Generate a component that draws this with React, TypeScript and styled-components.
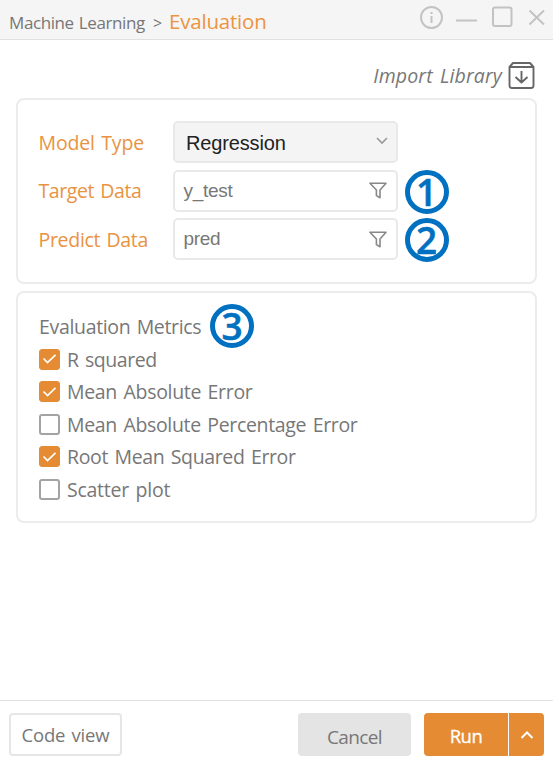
import React, { useState } from "react";
import styled, { createGlobalStyle, css } from "styled-components";

const orange = "#e58b33";
const line = "#e9e9e9";

const Global = createGlobalStyle`
  *, *::before, *::after { box-sizing: border-box; }
  body { margin: 0; background: #fff; }
  button { font: inherit; padding: 0; margin: 0; cursor: pointer; }
`;

const Window = styled.div`
  width: 553px;
  height: 771px;
  display: flex;
  flex-direction: column;
  background: #fff;
  color: #777;
  font-family: "Open Sans", "Noto Sans", sans-serif;
  font-size: 19.5px;
  overflow: hidden;
`;

const Header = styled.header`
  height: 40px;
  flex: none;
  display: flex;
  justify-content: space-between;
  padding: 0 7px 0 9px;
  background: #f5f5f5;
  border-bottom: 1px solid #e0e0e0;
`;

const Breadcrumb = styled.div`
  display: flex;
  align-items: baseline;
  white-space: nowrap;
  line-height: 42px;
`;

const Text = styled.span<{ $spacing?: number; $word?: number }>`
  white-space: nowrap;
  letter-spacing: ${(p) => p.$spacing ?? 0}px;
  word-spacing: ${(p) => p.$word ?? 0}px;
`;

const Parent = styled(Text)`
  font-size: 17px;
  width: 144px;
`;

const Separator = styled(Text)`
  width: 16px;
  font-size: 16px;
`;

const Current = styled(Text)`
  font-size: 20.5px;
  color: #ec9441;
`;

const WindowControls = styled.div`
  display: flex;
  svg { display: block; }
`;

const Content = styled.main`
  flex: 1;
  display: flex;
  flex-direction: column;
  padding: 18px 16px 0;
`;

const ImportRow = styled.div`
  height: 40px;
  flex: none;
  display: flex;
  align-items: flex-start;
  justify-content: flex-end;
  padding-right: 1px;
  line-height: 36px;
  font-style: italic;
  svg { display: block; margin: 3px 0 0 5px; }
`;

const Panel = styled.section<{ $height: number }>`
  height: ${(p) => p.$height}px;
  flex: none;
  margin-bottom: 7px;
  border: 2px solid #ececec;
  border-radius: 8px;
`;

const FieldsPanel = styled(Panel)`
  display: grid;
  grid-template-columns: 134px 225px;
  grid-auto-rows: 42px;
  row-gap: 6.5px;
  padding: 21px 0 0 20.5px;
  align-items: center;
`;

const Label = styled(Text)`
  color: #e99342;
`;

const control = css`
  width: 225px;
  height: 42px;
  position: relative;
  display: flex;
  align-items: center;
  justify-content: space-between;
  border: 2px solid ${line};
  border-radius: 5px;
  white-space: nowrap;
  svg { display: block; }
`;

const Select = styled.div`
  ${control}
  background: #f4f4f4;
  color: #222;
  font-family: "Liberation Sans", Arial, sans-serif;
  font-size: 20px;
  padding: 2px 7px 0 11.5px;
  svg { margin-top: -2px; }
`;

const Field = styled.div`
  ${control}
  background: #fff;
  padding: 0 9px 0 9px;
  font-family: "Liberation Sans", Arial, sans-serif;
  font-size: 19px;
`;

const Marker = styled.span<{ $left: number; $top: number }>`
  position: absolute;
  left: ${(p) => p.$left}px;
  top: ${(p) => p.$top}px;
  width: 44px;
  height: 44px;
  border: 5px solid #0070c0;
  border-radius: 50%;
  color: #0070c0;
  font: 600 37px/33px "Open Sans", "Noto Sans", sans-serif;
  -webkit-text-stroke: 0.5px #0070c0;
  text-align: center;
`;

const MetricsPanel = styled(Panel)`
  padding: 16px 0 0 21px;
`;

const MetricsTitle = styled.div`
  position: relative;
  height: 34px;
  line-height: 35px;
`;

const Metric = styled.div`
  height: 32.5px;
  display: flex;
  align-items: center;
  gap: 7px;
  cursor: pointer;
`;

const Checkbox = styled.span<{ $checked: boolean }>`
  width: 21px;
  height: 21px;
  flex: none;
  display: grid;
  place-items: center;
  border-radius: 3px;
  border: ${(p) => (p.$checked ? `1px solid ${orange}` : "2px solid #a3a3a3")};
  background: ${(p) => (p.$checked ? orange : "#fff")};
  svg { display: block; }
`;

const Footer = styled.footer`
  height: 71px;
  flex: none;
  display: flex;
  align-items: flex-start;
  padding: 12px 9px 0;
  border-top: 1px solid #e2e2e2;
`;

const Button = styled.button`
  height: 43px;
  display: flex;
  align-items: center;
  justify-content: center;
  border: 0;
  color: #777;
`;

const CodeButton = styled(Button)`
  width: 113px;
  margin-right: auto;
  background: #fff;
  border: 2px solid #e6e6e6;
  border-radius: 4px;
  font-size: 18.5px;
`;

const CancelButton = styled(Button)`
  width: 113px;
  margin-right: 13px;
  padding-top: 5px;
  border-radius: 4px;
  background: #e4e4e4;
  font-size: 19px;
`;

const RunButton = styled(Button)`
  width: 84px;
  margin-right: 1px;
  padding-top: 2px;
  border-radius: 4px 0 0 4px;
  background: ${orange};
  color: #fff;
  font-size: 18.5px;
  -webkit-text-stroke: 0.3px #fff;
`;

const MoreButton = styled(Button)`
  width: 35px;
  border-radius: 0 4px 4px 0;
  background: ${orange};
`;

const Funnel = () => (
  <svg width="18" height="17" viewBox="0 0 18 17" fill="none" stroke="#888" strokeWidth="1.6" strokeLinejoin="round">
    <path d="M1 1.2H17L11 8V15.8L7.4 13.6V8Z" />
  </svg>
);

const initialMetrics = [
  { name: "R squared", checked: true, spacing: -0.45 },
  { name: "Mean Absolute Error", checked: true, spacing: -0.32 },
  { name: "Mean Absolute Percentage Error", checked: false, spacing: -0.34 },
  { name: "Root Mean Squared Error", checked: true, spacing: -0.37 },
  { name: "Scatter plot", checked: false, spacing: -0.25 },
];

export default function App() {
  const [metrics, setMetrics] = useState(initialMetrics);
  const toggle = (index: number) =>
    setMetrics(metrics.map((m, i) => (i === index ? { ...m, checked: !m.checked } : m)));

  return (
    <Window>
      <Global />
      <Header>
        <Breadcrumb>
          <Parent $spacing={-0.4} $word={1}>Machine Learning</Parent>
          <Separator>&gt;</Separator>
          <Current $spacing={-0.2}>Evaluation</Current>
        </Breadcrumb>
        <WindowControls>
          <svg width="128" height="36" viewBox="0 0 128 36" fill="none" stroke="#c3c3c3" strokeWidth="2">
            <circle cx="13.5" cy="17.5" r="10.5" />
            <path d="M13.5 16V23M13.5 12V14M38 20.5H59" />
            <rect x="75" y="7.5" width="18.5" height="18.5" rx="2" />
            <path d="M111.5 10.5L126 24.5M126 10.5L111.5 24.5" />
          </svg>
        </WindowControls>
      </Header>
      <Content>
        <ImportRow>
          <Text $spacing={0.15} $word={2}>Import Library</Text>
          <svg width="29" height="29" viewBox="0 0 29 29" fill="none" stroke="#666" strokeWidth="1.9" strokeLinejoin="round">
            <path d="M2.5 6L6 2H23L26.5 6V24.5Q26.5 27 24 27H5Q2.5 27 2.5 24.5ZM2.5 6H26.5M14.5 10V21.5M8.5 16L14.5 21.5L20.5 16" />
          </svg>
        </ImportRow>
        <FieldsPanel $height={186}>
          <Label $spacing={-0.15} $word={1.5}>Model Type</Label>
          <Select>
            <Text $spacing={-0.15}>Regression</Text>
            <svg width="14" height="12" viewBox="0 0 14 12" fill="none" stroke="#999" strokeWidth="1.6">
              <path d="M2 2L7 7L12 2" />
            </svg>
          </Select>
          <Label $spacing={-0.4} $word={1.5}>Target Data</Label>
          <Field>
            <Text $spacing={-0.3}>y_test</Text>
            <Funnel />
            <Marker $left={230} $top={-2}>1</Marker>
          </Field>
          <Label $spacing={-0.3} $word={1.5}>Predict Data</Label>
          <Field>
            <Text $spacing={-0.3}>pred</Text>
            <Funnel />
            <Marker $left={230} $top={-2}>2</Marker>
          </Field>
        </FieldsPanel>
        <MetricsPanel $height={232}>
          <MetricsTitle>
            <Text $spacing={-0.33} $word={1.5}>Evaluation Metrics</Text>
            <Marker $left={171} $top={-5}>3</Marker>
          </MetricsTitle>
          {metrics.map((m, i) => (
            <Metric key={m.name} onClick={() => toggle(i)}>
              <Checkbox $checked={m.checked}>
                {m.checked && (
                  <svg width="15" height="12" viewBox="0 0 15 12" fill="none" stroke="#fff" strokeWidth="1.7">
                    <path d="M1.5 5.5L5.5 9.5L13.5 1.8" />
                  </svg>
                )}
              </Checkbox>
              <Text $spacing={m.spacing} $word={1.8}>{m.name}</Text>
            </Metric>
          ))}
        </MetricsPanel>
      </Content>
      <Footer>
        <CodeButton><Text $spacing={-0.15} $word={1.5}>Code view</Text></CodeButton>
        <CancelButton><Text $spacing={-0.6}>Cancel</Text></CancelButton>
        <RunButton><Text $spacing={-0.5}>Run</Text></RunButton>
        <MoreButton aria-label="More run options">
          <svg width="14" height="10" viewBox="0 0 14 10" fill="none" stroke="#fff" strokeWidth="2">
            <path d="M1.5 8L7 2.5L12.5 8" />
          </svg>
        </MoreButton>
      </Footer>
    </Window>
  );
}
